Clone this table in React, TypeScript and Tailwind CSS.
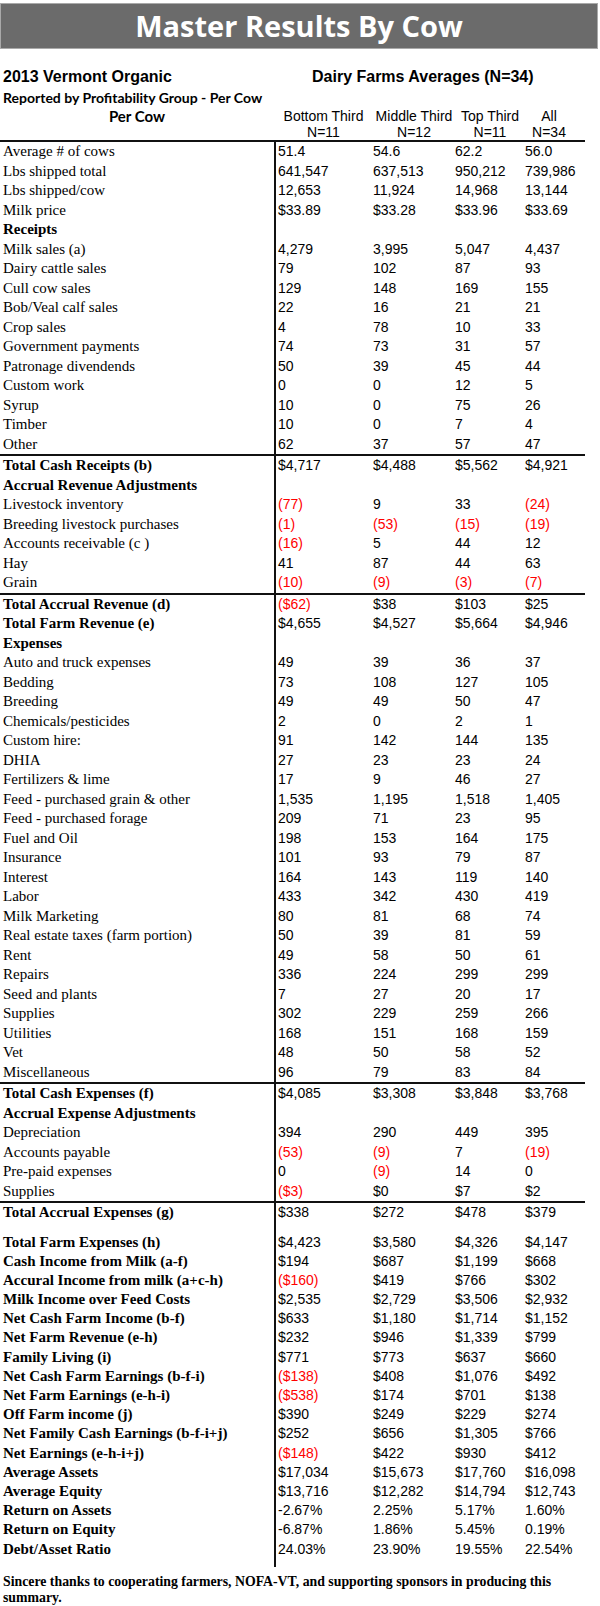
import React from 'react';

type Row = {
  label: string;
  vals?: string[];
  bold?: boolean;
};

type Item = Row | 'sep' | 'gap';

const items: Item[] = [
  { label: 'Average # of cows', vals: ['51.4', '54.6', '62.2', '56.0'] },
  { label: 'Lbs shipped total', vals: ['641,547', '637,513', '950,212', '739,986'] },
  { label: 'Lbs shipped/cow', vals: ['12,653', '11,924', '14,968', '13,144'] },
  { label: 'Milk price', vals: ['$33.89', '$33.28', '$33.96', '$33.69'] },
  { label: 'Receipts', bold: true },
  { label: 'Milk sales (a)', vals: ['4,279', '3,995', '5,047', '4,437'] },
  { label: 'Dairy cattle sales', vals: ['79', '102', '87', '93'] },
  { label: 'Cull cow sales', vals: ['129', '148', '169', '155'] },
  { label: 'Bob/Veal calf sales', vals: ['22', '16', '21', '21'] },
  { label: 'Crop sales', vals: ['4', '78', '10', '33'] },
  { label: 'Government payments', vals: ['74', '73', '31', '57'] },
  { label: 'Patronage divendends', vals: ['50', '39', '45', '44'] },
  { label: 'Custom work', vals: ['0', '0', '12', '5'] },
  { label: 'Syrup', vals: ['10', '0', '75', '26'] },
  { label: 'Timber', vals: ['10', '0', '7', '4'] },
  { label: 'Other', vals: ['62', '37', '57', '47'] },
  'sep',
  { label: 'Total Cash Receipts (b)', bold: true, vals: ['$4,717', '$4,488', '$5,562', '$4,921'] },
  { label: 'Accrual Revenue Adjustments', bold: true },
  { label: 'Livestock inventory', vals: ['(77)', '9', '33', '(24)'] },
  { label: 'Breeding livestock purchases', vals: ['(1)', '(53)', '(15)', '(19)'] },
  { label: 'Accounts receivable (c )', vals: ['(16)', '5', '44', '12'] },
  { label: 'Hay', vals: ['41', '87', '44', '63'] },
  { label: 'Grain', vals: ['(10)', '(9)', '(3)', '(7)'] },
  'sep',
  { label: 'Total Accrual Revenue (d)', bold: true, vals: ['($62)', '$38', '$103', '$25'] },
  { label: 'Total Farm Revenue (e)', bold: true, vals: ['$4,655', '$4,527', '$5,664', '$4,946'] },
  { label: 'Expenses', bold: true },
  { label: 'Auto and truck expenses', vals: ['49', '39', '36', '37'] },
  { label: 'Bedding', vals: ['73', '108', '127', '105'] },
  { label: 'Breeding', vals: ['49', '49', '50', '47'] },
  { label: 'Chemicals/pesticides', vals: ['2', '0', '2', '1'] },
  { label: 'Custom hire:', vals: ['91', '142', '144', '135'] },
  { label: 'DHIA', vals: ['27', '23', '23', '24'] },
  { label: 'Fertilizers & lime', vals: ['17', '9', '46', '27'] },
  { label: 'Feed - purchased grain & other', vals: ['1,535', '1,195', '1,518', '1,405'] },
  { label: 'Feed - purchased forage', vals: ['209', '71', '23', '95'] },
  { label: 'Fuel and Oil', vals: ['198', '153', '164', '175'] },
  { label: 'Insurance', vals: ['101', '93', '79', '87'] },
  { label: 'Interest', vals: ['164', '143', '119', '140'] },
  { label: 'Labor', vals: ['433', '342', '430', '419'] },
  { label: 'Milk Marketing', vals: ['80', '81', '68', '74'] },
  { label: 'Real estate taxes (farm portion)', vals: ['50', '39', '81', '59'] },
  { label: 'Rent', vals: ['49', '58', '50', '61'] },
  { label: 'Repairs', vals: ['336', '224', '299', '299'] },
  { label: 'Seed and plants', vals: ['7', '27', '20', '17'] },
  { label: 'Supplies', vals: ['302', '229', '259', '266'] },
  { label: 'Utilities', vals: ['168', '151', '168', '159'] },
  { label: 'Vet', vals: ['48', '50', '58', '52'] },
  { label: 'Miscellaneous', vals: ['96', '79', '83', '84'] },
  'sep',
  { label: 'Total Cash Expenses (f)', bold: true, vals: ['$4,085', '$3,308', '$3,848', '$3,768'] },
  { label: 'Accrual Expense Adjustments', bold: true },
  { label: 'Depreciation', vals: ['394', '290', '449', '395'] },
  { label: 'Accounts payable', vals: ['(53)', '(9)', '7', '(19)'] },
  { label: 'Pre-paid expenses', vals: ['0', '(9)', '14', '0'] },
  { label: 'Supplies', vals: ['($3)', '$0', '$7', '$2'] },
  'sep',
  { label: 'Total Accrual Expenses (g)', bold: true, vals: ['$338', '$272', '$478', '$379'] },
  'gap',
  { label: 'Total Farm Expenses (h)', bold: true, vals: ['$4,423', '$3,580', '$4,326', '$4,147'] },
  { label: 'Cash Income from Milk (a-f)', bold: true, vals: ['$194', '$687', '$1,199', '$668'] },
  { label: 'Accural Income from milk (a+c-h)', bold: true, vals: ['($160)', '$419', '$766', '$302'] },
  { label: 'Milk Income over Feed Costs', bold: true, vals: ['$2,535', '$2,729', '$3,506', '$2,932'] },
  { label: 'Net Cash Farm Income (b-f)', bold: true, vals: ['$633', '$1,180', '$1,714', '$1,152'] },
  { label: 'Net Farm Revenue (e-h)', bold: true, vals: ['$232', '$946', '$1,339', '$799'] },
  { label: 'Family Living (i)', bold: true, vals: ['$771', '$773', '$637', '$660'] },
  { label: 'Net Cash Farm Earnings (b-f-i)', bold: true, vals: ['($138)', '$408', '$1,076', '$492'] },
  { label: 'Net Farm Earnings (e-h-i)', bold: true, vals: ['($538)', '$174', '$701', '$138'] },
  { label: 'Off Farm income (j)', bold: true, vals: ['$390', '$249', '$229', '$274'] },
  { label: 'Net Family Cash Earnings (b-f-i+j)', bold: true, vals: ['$252', '$656', '$1,305', '$766'] },
  { label: 'Net Earnings (e-h-i+j)', bold: true, vals: ['($148)', '$422', '$930', '$412'] },
  { label: 'Average Assets', bold: true, vals: ['$17,034', '$15,673', '$17,760', '$16,098'] },
  { label: 'Average Equity', bold: true, vals: ['$13,716', '$12,282', '$14,794', '$12,743'] },
  { label: 'Return on Assets', bold: true, vals: ['-2.67%', '2.25%', '5.17%', '1.60%'] },
  { label: 'Return on Equity', bold: true, vals: ['-6.87%', '1.86%', '5.45%', '0.19%'] },
  { label: 'Debt/Asset Ratio', bold: true, vals: ['24.03%', '23.90%', '19.55%', '22.54%'] },
];

const grid = 'grid grid-cols-[274px_99px_82px_70px_60px] w-[585px]';

const heads = [
  { top: 'Bottom Third', n: 'N=11', cls: '' },
  { top: 'Middle Third', n: 'N=12', cls: '' },
  { top: 'Top Third', n: 'N=11', cls: '' },
  { top: 'All', n: 'N=34', cls: 'pr-[12px]' },
];

function Value({ v, first }: { v?: string; first?: boolean }) {
  const red = v?.startsWith('(');
  return (
    <div
      className={`font-['Liberation_Sans',Arial,sans-serif] text-[14px] ${
        red ? 'text-[#ff0000]' : 'text-black'
      } ${first ? 'border-l-2 border-[#111] pl-[2px]' : ''}`}
    >
      {v}
    </div>
  );
}

// blank strip that keeps the vertical rule running
function Spacer({ h }: { h: string }) {
  return (
    <div className={`${grid} ${h}`}>
      <div />
      <div className="border-l-2 border-[#111]" />
    </div>
  );
}

function DataRow({ row, tight }: { row: Row; tight: boolean }) {
  const vals = row.vals ?? ['', '', '', ''];
  return (
    <div className={`${grid} ${tight ? 'h-[19.2px] leading-[19.2px]' : 'h-[19.5px] leading-[19.5px]'}`}>
      <div
        className={`pl-[3px] font-['Liberation_Serif','Times_New_Roman',serif] text-[15px] text-black whitespace-nowrap ${
          row.bold ? 'font-bold' : ''
        }`}
      >
        {row.label}
      </div>
      {vals.map((v, i) => (
        <Value key={i} v={v} first={i === 0} />
      ))}
    </div>
  );
}

export default function App() {
  const gapAt = items.indexOf('gap');
  return (
    <div className="w-[600px] h-[1606px] overflow-hidden bg-white">
      {/* Title bar */}
      <div className="pt-[3px]">
        <div className="h-[46px] w-[598px] pb-[2px] bg-[#6b6b6b] border border-[#a9a9a9] flex items-center justify-center">
          <span className="font-['Open_Sans',sans-serif] font-bold text-[29px] text-white leading-none">
            Master Results By Cow
          </span>
        </div>
      </div>

      {/* Report heading */}
      <div className="mt-[19px] h-[18px] leading-[18px] flex font-['Liberation_Sans',Arial,sans-serif] font-bold text-[16px] text-black">
        <span className="w-[312px] pl-[3px]">2013 Vermont Organic</span>
        <span>Dairy Farms Averages (N=34)</span>
      </div>
      <div className="mt-[4px] h-[16px] leading-[16px] pl-[3px] font-['Lato',sans-serif] font-bold text-[14px] text-black">
        Reported by Profitability Group - Per Cow
      </div>

      {/* Column heads */}
      <div className={`${grid} mt-[2px] h-[32px] leading-[16px] text-black`}>
        <div className="text-center font-['Lato',sans-serif] font-bold text-[15px]">Per Cow</div>
        {heads.map((h) => (
          <div key={h.top} className={`text-center font-['Liberation_Sans',Arial,sans-serif] text-[14px] ${h.cls}`}>
            <div>{h.top}</div>
            <div>{h.n}</div>
          </div>
        ))}
      </div>
      <div className="h-[2px] w-[585px] bg-[#111]" />

      {/* Table */}
      <div>
        {items.map((it, i) => {
          if (it === 'sep') {
            return <div key={i} className="h-[2px] w-[585px] bg-[#111]" />;
          }
          if (it === 'gap') return <Spacer key={i} h="h-[10px]" />;
          return <DataRow key={i} row={it} tight={i > gapAt} />;
        })}
        <Spacer h="h-[8px]" />
      </div>

      {/* Footer */}
      <p className="w-[585px] pl-[3px] mt-[7px] font-['Liberation_Serif','Times_New_Roman',serif] font-bold text-[13.8px] leading-[16px] text-black">
        Sincere thanks to cooperating farmers, NOFA-VT, and supporting sponsors in producing this summary.
      </p>
    </div>
  );
}
